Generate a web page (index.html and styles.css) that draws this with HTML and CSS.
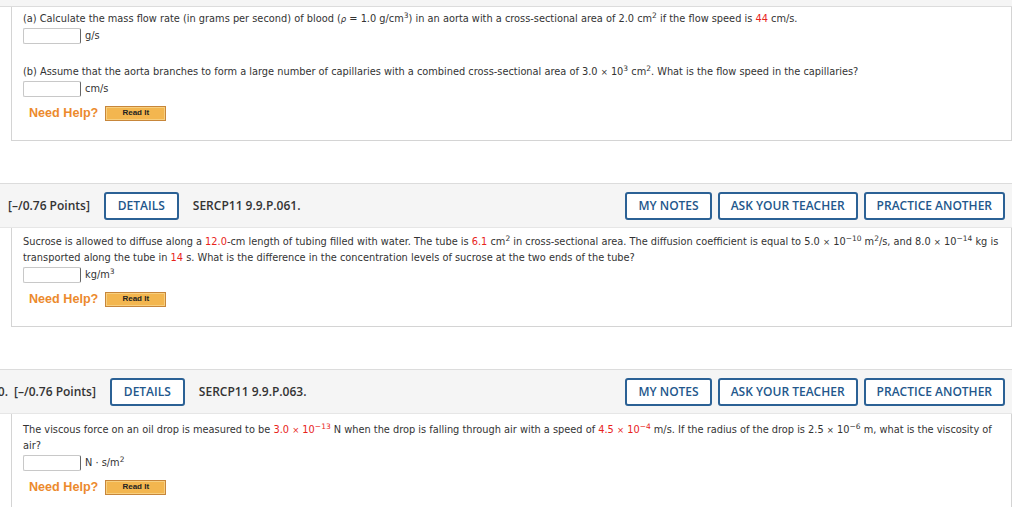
FILE: index.html
```html
<!DOCTYPE html>
<html>
<head>
<meta charset="utf-8">
<link rel="stylesheet" href="styles.css">
</head>
<body>
<div class="page">
  <div class="qhead qhead-stub"></div>
  <div class="qbody qbody-first">
    <div class="part">
      <p class="qtext">(a) Calculate the mass flow rate (in grams per second) of blood (<i class="rho">ρ</i> = 1.0 g/cm<sup>3</sup>) in an aorta with a cross-sectional area of 2.0 cm<sup>2</sup> if the flow speed is <span class="red">44</span> cm/s.</p>
      <div class="answer"><span class="box"></span><span class="unit">g/s</span></div>
    </div>
    <div class="part">
      <p class="qtext">(b) Assume that the aorta branches to form a large number of capillaries with a combined cross-sectional area of 3.0 <span class="times">×</span> 10<sup>3</sup> cm<sup>2</sup>. What is the flow speed in the capillaries?</p>
      <div class="answer"><span class="box"></span><span class="unit">cm/s</span></div>
    </div>
    <div class="help"><span class="need">Need Help?</span><span class="readit">Read It</span></div>
  </div>

  <div class="qhead">
    <span class="points">[–/0.76 Points]</span>
    <span class="btn btn-details">DETAILS</span>
    <span class="code">SERCP11 9.9.P.061.</span>
    <span class="spacer"></span>
    <span class="btn">MY NOTES</span>
    <span class="btn">ASK YOUR TEACHER</span>
    <span class="btn">PRACTICE ANOTHER</span>
  </div>
  <div class="qbody">
    <p class="qtext">Sucrose is allowed to diffuse along a <span class="red">12.0</span>-cm length of tubing filled with water. The tube is <span class="red">6.1</span> cm<sup>2</sup> in cross-sectional area. The diffusion coefficient is equal to 5.0 <span class="times">×</span> 10<sup>−10</sup> m<sup>2</sup>/s, and 8.0 <span class="times">×</span> 10<sup>−14</sup> kg is transported along the tube in <span class="red">14</span> s. What is the difference in the concentration levels of sucrose at the two ends of the tube?</p>
    <div class="answer"><span class="box"></span><span class="unit">kg/m<sup>3</sup></span></div>
    <div class="help"><span class="need">Need Help?</span><span class="readit">Read It</span></div>
  </div>

  <div class="qhead">
    <span class="num">10.</span>
    <span class="points">[–/0.76 Points]</span>
    <span class="btn btn-details">DETAILS</span>
    <span class="code">SERCP11 9.9.P.063.</span>
    <span class="spacer"></span>
    <span class="btn">MY NOTES</span>
    <span class="btn">ASK YOUR TEACHER</span>
    <span class="btn">PRACTICE ANOTHER</span>
  </div>
  <div class="qbody qbody-last">
    <p class="qtext">The viscous force on an oil drop is measured to be <span class="red">3.0 <span class="times">×</span> 10<sup>−13</sup></span> N when the drop is falling through air with a speed of <span class="red">4.5 <span class="times">×</span> 10<sup>−4</sup></span> m/s. If the radius of the drop is 2.5 <span class="times">×</span> 10<sup>−6</sup> m, what is the viscosity of air?</p>
    <div class="answer"><span class="box"></span><span class="unit">N · s/m<sup>2</sup></span></div>
    <div class="help"><span class="need">Need Help?</span><span class="readit">Read It</span></div>
  </div>
</div>
</body>
</html>
```

FILE: styles.css
```css
html, body {
  margin: 0;
  padding: 0;
  background: #ffffff;
}
body {
  overflow: hidden;
}
.page {
  width: 1012px;
}
.qhead {
  display: flex;
  align-items: center;
  height: 43px;
  margin-top: 42px;
  padding: 0 7px 0 8px;
  background: #f5f5f5;
  border-top: 1px solid #dcdcdc;
  border-bottom: 1px solid #e6e6e6;
  font-family: "Open Sans", "DejaVu Sans", sans-serif;
  font-size: 12px;
  font-weight: 600;
  color: #333333;
  white-space: nowrap;
}
.qhead-stub {
  height: 6px;
  margin-top: 0;
  border-top: none;
  border-bottom: 1px solid #dcdcdc;
}
.num {
  margin-left: -17px;
  margin-right: 6px;
}
.points {
  margin-right: 14px;
}
.btn {
  display: inline-flex;
  align-items: center;
  justify-content: center;
  box-sizing: border-box;
  height: 28px;
  padding: 0 11px;
  border: 2px solid #2b6195;
  border-radius: 3px;
  background: #ffffff;
  color: #23578c;
  font-weight: 600;
  margin-left: 6px;
}
.btn-details {
  margin-left: 0;
  margin-right: 14px;
  padding: 0 12px;
}
.spacer {
  flex: 1;
}
.qbody {
  margin-left: 11px;
  width: 1001px;
  box-sizing: border-box;
  border: 1px solid #d4d4d4;
  border-top: none;
  padding: 6px 7px 19px 11px;
  font-family: "DejaVu Sans", Verdana, sans-serif;
  font-size: 9.8px;
  line-height: 16px;
  color: #333333;
}
.qbody-first {
  padding-top: 4px;
}
.qbody-last {
  padding-top: 8px;
}
.qtext {
  margin: 0;
}
.part + .part {
  margin-top: 20px;
}
sup {
  font-size: 7.5px;
  line-height: 1;
  vertical-align: 4px;
}
.times {
  font-size: 8.5px;
}
.rho {
  font-style: italic;
  font-size: 8.5px;
}
.red {
  color: #e8231b;
}
.answer {
  display: flex;
  align-items: center;
  height: 16px;
  margin-top: 1px;
}
.box {
  display: inline-block;
  box-sizing: border-box;
  width: 58px;
  height: 16px;
  border: 1px solid #c8c8c8;
  border-right: 1px solid #666666;
  border-radius: 2px;
  background: #ffffff;
  margin-right: 4px;
}
.unit {
  color: #333333;
}
.help {
  display: flex;
  align-items: center;
  height: 16px;
  margin-top: 8px;
  padding-left: 6px;
}
.need {
  font-family: "Liberation Sans", Arial, sans-serif;
  font-size: 12.6px;
  font-weight: bold;
  color: #ec8a2d;
  margin-right: 7px;
}
.readit {
  display: inline-flex;
  align-items: center;
  justify-content: center;
  box-sizing: border-box;
  width: 61px;
  height: 15px;
  background: #f3b64f;
  border: 1px solid #c7863a;
  box-shadow: inset 0 0 0 1px #f7cf7f;
  font-family: "Liberation Sans", Arial, sans-serif;
  font-size: 8px;
  font-weight: bold;
  color: #222222;
}
```
